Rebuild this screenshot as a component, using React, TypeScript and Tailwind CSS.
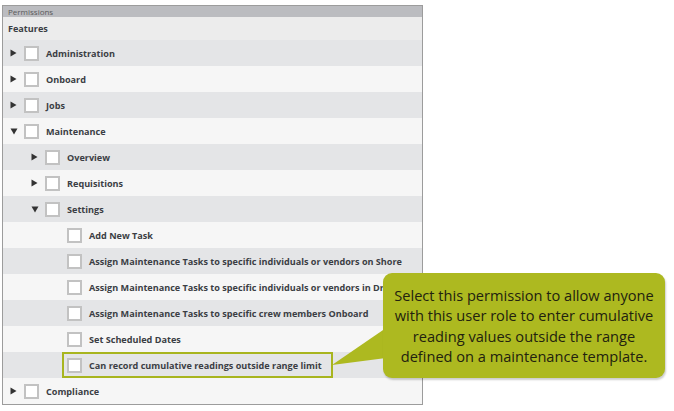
import React from "react";

type Row = {
  label: string;
  level: number;
  arrow?: "right" | "down";
  highlight?: boolean;
};

const ROWS: Row[] = [
  { label: "Administration", level: 0, arrow: "right" },
  { label: "Onboard", level: 0, arrow: "right" },
  { label: "Jobs", level: 0, arrow: "right" },
  { label: "Maintenance", level: 0, arrow: "down" },
  { label: "Overview", level: 1, arrow: "right" },
  { label: "Requisitions", level: 1, arrow: "right" },
  { label: "Settings", level: 1, arrow: "down" },
  { label: "Add New Task", level: 2 },
  { label: "Assign Maintenance Tasks to specific individuals or vendors on Shore", level: 2 },
  { label: "Assign Maintenance Tasks to specific individuals or vendors in Dry Dock", level: 2 },
  { label: "Assign Maintenance Tasks to specific crew members Onboard", level: 2 },
  { label: "Set Scheduled Dates", level: 2 },
  { label: "Can record cumulative readings outside range limit", level: 2, highlight: true },
  { label: "Compliance", level: 0, arrow: "right" },
];

function Arrow({ dir }: { dir: "right" | "down" }) {
  return dir === "right" ? (
    <svg width="7" height="8" viewBox="0 0 7 8" className="shrink-0">
      <path d="M0.5 0.5 L6.5 4 L0.5 7.5 Z" fill="#333" />
    </svg>
  ) : (
    <svg width="8" height="7" viewBox="0 0 8 7" className="shrink-0">
      <path d="M0.5 0.5 L7.5 0.5 L4 6.5 Z" fill="#333" />
    </svg>
  );
}

function Checkbox() {
  return <span className="w-[15px] h-[15px] border-2 border-[#c2c2c2] bg-white shrink-0" />;
}

function PermissionRow({ row, dark }: { row: Row; dark: boolean }) {
  const pad = row.level === 0 ? "pl-[7px]" : row.level === 1 ? "pl-[28px]" : "pl-[64px]";
  const content = (
    <>
      {row.arrow && (
        <span className="w-[14px] flex items-center shrink-0">
          <Arrow dir={row.arrow} />
        </span>
      )}
      <Checkbox />
      <span className="ml-[7px] pt-px whitespace-nowrap text-[9.1px] font-bold text-[#3b3e44]">{row.label}</span>
    </>
  );

  return (
    <div className={`h-[26px] flex items-center overflow-hidden ${dark ? "bg-[#e4e5e7]" : "bg-[#f6f6f6]"} ${row.highlight ? "pl-[59px]" : pad}`}>
      {row.highlight ? (
        <div className="h-[26px] w-[271px] border-2 border-[#a8b51f] flex items-center pl-[3px]">{content}</div>
      ) : (
        content
      )}
    </div>
  );
}

export default function App() {
  return (
    <div className="relative w-[674px] h-[411px] bg-white" style={{ fontFamily: '"Open Sans", "Liberation Sans", sans-serif' }}>
      <div className="ml-[2px] pt-[5px] w-[421px]">
        <div className="border border-[#9c9c9c] bg-[#ececec]">
          <div className="h-[11px] bg-[#bbbcc0] flex items-center pl-[5px] text-[8px] text-[#5a5a5a] leading-none">
            Permissions
          </div>
          <div className="h-[23px] flex items-center pl-[5px] text-[9.1px] font-bold text-[#3b3e44]">Features</div>
          {ROWS.map((r, i) => (
            <PermissionRow key={r.label} row={r} dark={i % 2 === 0} />
          ))}
        </div>
      </div>

      {/* callout */}
      <svg className="absolute left-[330px] top-[325px]" width="60" height="45" viewBox="0 0 60 45">
        <path d="M56 3 L2 40 L56 33 Z" fill="#adb920" />
      </svg>
      <div className="absolute left-[383px] top-[273px] w-[282px] h-[105px] rounded-[9px] bg-[#adb920] shadow-[1px_2px_2px_rgba(0,0,0,0.2)] flex items-center justify-center text-center text-[14.6px] leading-[20.3px] text-[#22220f]">
        <div>
          Select this permission to allow anyone
          <br />
          with this user role to enter cumulative
          <br />
          reading values outside the range
          <br />
          defined on a maintenance template.
        </div>
      </div>
    </div>
  );
}
